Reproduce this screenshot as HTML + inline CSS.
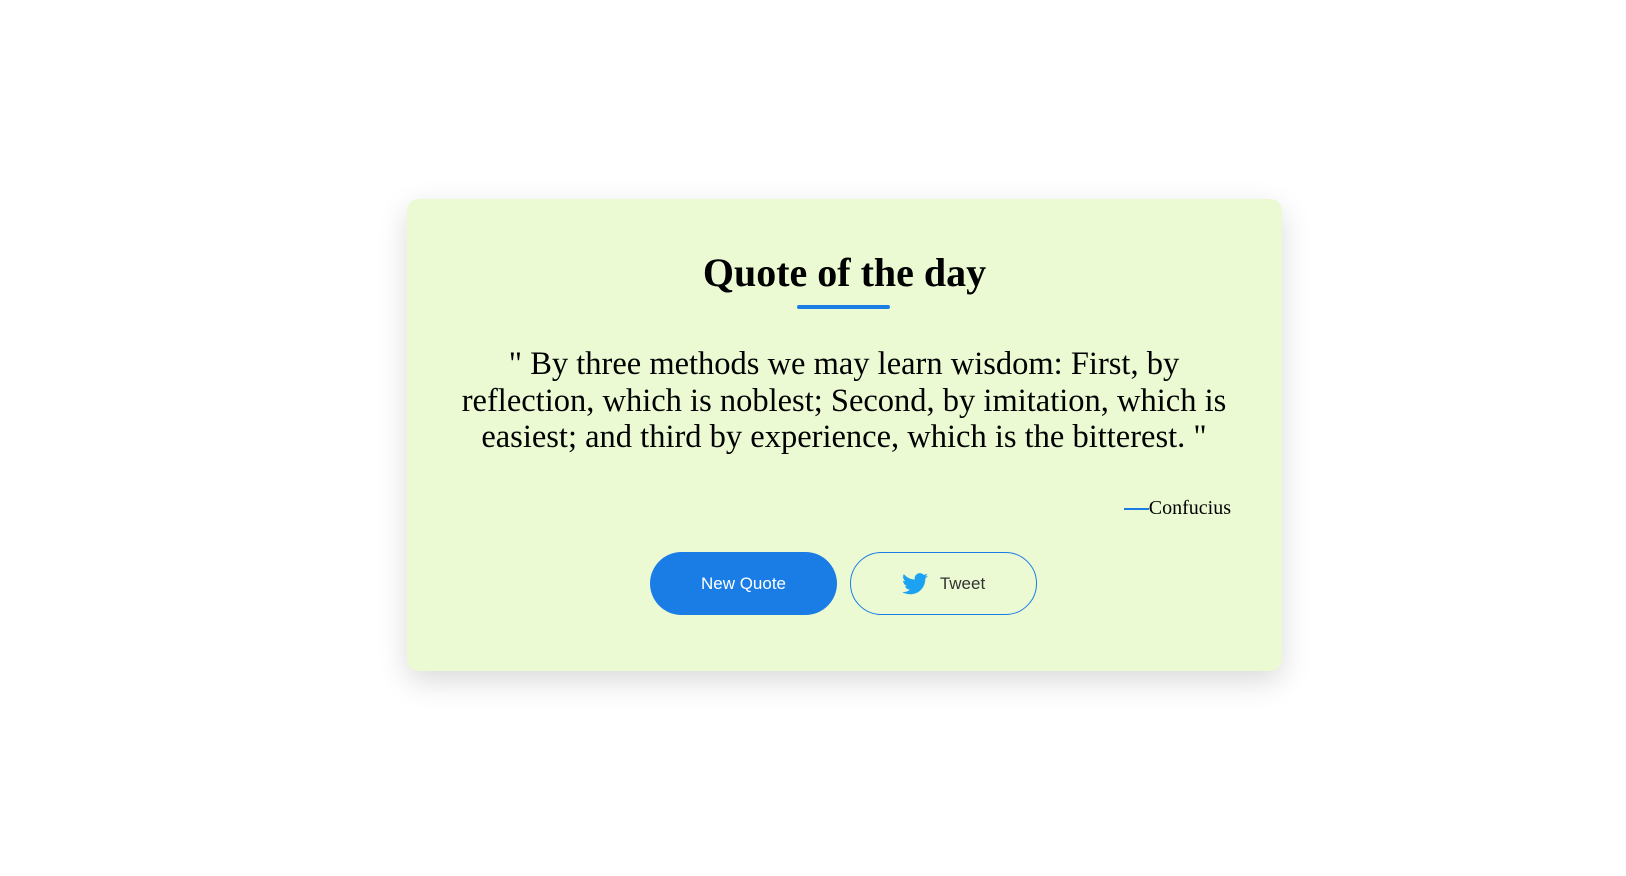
<!DOCTYPE html>
<html><head><meta charset="utf-8"><style>
html,body{margin:0;padding:0;background:#fff;width:1626px;height:876px;overflow:hidden}
.card{position:absolute;left:407px;top:199px;width:875px;height:472px;background:#ebfad3;border-radius:12px;box-shadow:0 10px 30px rgba(0,0,0,0.15)}
h1{position:absolute;left:407px;width:875px;top:249px;margin:0;text-align:center;font:bold 40px "Liberation Serif",serif;line-height:48px;color:#000}
.ul{position:absolute;left:797px;top:305px;width:93px;height:4px;border-radius:2px;background:#1a7de6}
.q{position:absolute;left:444px;width:800px;top:346px;text-align:center;font:32.5px "Liberation Serif",serif;line-height:36.6px;color:#000}
.a{position:absolute;right:395px;top:496px;font:20px "Liberation Serif",serif;line-height:24px;color:#000}
.a span{display:inline-block;width:25px;height:2px;background:#1a7de6;vertical-align:middle;margin-right:0}
.b{position:absolute;top:552px;width:187px;height:63px;border-radius:32px;box-sizing:border-box;font:17px "Liberation Sans",sans-serif;display:flex;align-items:center;justify-content:center}
.b1{left:650px;background:#1a7de6;color:#fff}
.b2{left:850px;border:1px solid #1a7de6;color:#333}
</style></head><body>
<div class="card"></div>
<h1>Quote of the day</h1>
<div class="ul"></div>
<div class="q">" By three methods we may learn wisdom: First, by reflection, which is noblest; Second, by imitation, which is easiest; and third by experience, which is the bitterest. "</div>
<div class="a"><span></span>Confucius</div>
<div class="b b1">New Quote</div>
<div class="b b2"><svg width="26" height="22" viewBox="0 0 24 20" style="margin-right:12px"><path fill="#1da1f2" d="M24 2.4a9.8 9.8 0 0 1-2.8.8A4.9 4.9 0 0 0 23.3.4a9.9 9.9 0 0 1-3.1 1.2A4.9 4.9 0 0 0 11.8 6 14 14 0 0 1 1.7.9a4.9 4.9 0 0 0 1.5 6.6A4.9 4.9 0 0 1 1 6.9v.1a4.9 4.9 0 0 0 3.9 4.8 4.9 4.9 0 0 1-2.2.1 4.9 4.9 0 0 0 4.6 3.4A9.9 9.9 0 0 1 0 17.3 14 14 0 0 0 7.5 19.5c9.1 0 14-7.5 14-14v-.6A10 10 0 0 0 24 2.4z"/></svg>Tweet</div>
</body></html>
